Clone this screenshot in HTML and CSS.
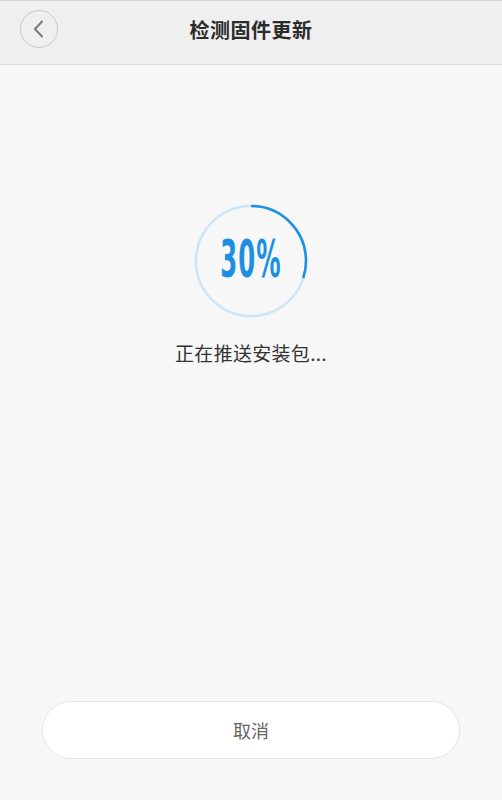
FILE: index.html
```html
<!DOCTYPE html>
<html lang="zh">
<head>
<meta charset="utf-8">
<link rel="stylesheet" href="styles.css">
</head>
<body>
<div class="page">
  <header class="bar">
    <button class="back" aria-label="返回">
      <svg width="16" height="20" viewBox="0 0 16 20"><path d="M11 2.5 L4 10 L11 17.5" fill="none" stroke="#7a7a7a" stroke-width="2" stroke-linecap="round" stroke-linejoin="round"/></svg>
    </button>
    <h1 class="title">检测固件更新</h1>
  </header>
  <main class="content">
    <div class="ring">
      <svg width="114" height="114" viewBox="0 0 114 114">
        <circle cx="57" cy="57" r="55" fill="none" stroke="#cce6f7" stroke-width="2.5"/>
        <circle cx="57" cy="57" r="55" fill="none" stroke="#1a90e2" stroke-width="2.5" stroke-dasharray="103.67 400" transform="rotate(-90 57 57)"/>
      </svg>
      <span class="pct">30%</span>
    </div>
    <p class="status">正在推送安装包...</p>
  </main>
  <footer class="foot">
    <button class="cancel">取消</button>
  </footer>
</div>
</body>
</html>
```
FILE: styles.css
```css
html, body { margin: 0; padding: 0; }
body {
  background: #f7f7f7;
  font-family: "Noto Sans CJK SC", "Noto Sans", sans-serif;
}
.page {
  width: 502px;
  height: 800px;
  display: flex;
  flex-direction: column;
}
.bar {
  height: 63px;
  background: #efefef;
  border-top: 1px solid #d6d6d6;
  border-bottom: 1px solid #dcdcdc;
  display: flex;
  align-items: center;
  justify-content: center;
  position: relative;
  box-sizing: content-box;
}
.back {
  position: absolute;
  left: 20px;
  top: 9px;
  width: 38px;
  height: 38px;
  border-radius: 50%;
  border: 1px solid #c8c8c8;
  background: transparent;
  padding: 0;
  display: flex;
  align-items: center;
  justify-content: center;
}
.title {
  margin: 0;
  margin-top: -6px;
  font-size: 20px;
  font-weight: 700;
  color: #2b2b2b;
  letter-spacing: 0.5px;
}
.content {
  flex: 1;
  display: flex;
  flex-direction: column;
  align-items: center;
  padding-top: 139px;
}
.ring {
  width: 114px;
  height: 114px;
  position: relative;
  display: flex;
  align-items: center;
  justify-content: center;
}
.ring svg { position: absolute; left: 0; top: 0; }
.pct {
  font-family: "DejaVu Sans Condensed", "DejaVu Sans", sans-serif;
  font-weight: 700;
  font-size: 52px;
  color: #1a8fe3;
  transform: scaleX(0.52);
  line-height: 1;
  margin-top: -4px;
  letter-spacing: 2px;
}
.status {
  margin: 21px 0 0;
  font-size: 19px;
  color: #333;
  letter-spacing: 0.3px;
}
.foot {
  display: flex;
  justify-content: center;
  padding-bottom: 41px;
}
.cancel {
  width: 418px;
  height: 58px;
  border-radius: 29px;
  background: #fff;
  border: 1px solid #e6e6e6;
  font-family: "Noto Sans CJK SC", sans-serif;
  font-size: 18px;
  color: #666;
  padding: 0;
}
```
